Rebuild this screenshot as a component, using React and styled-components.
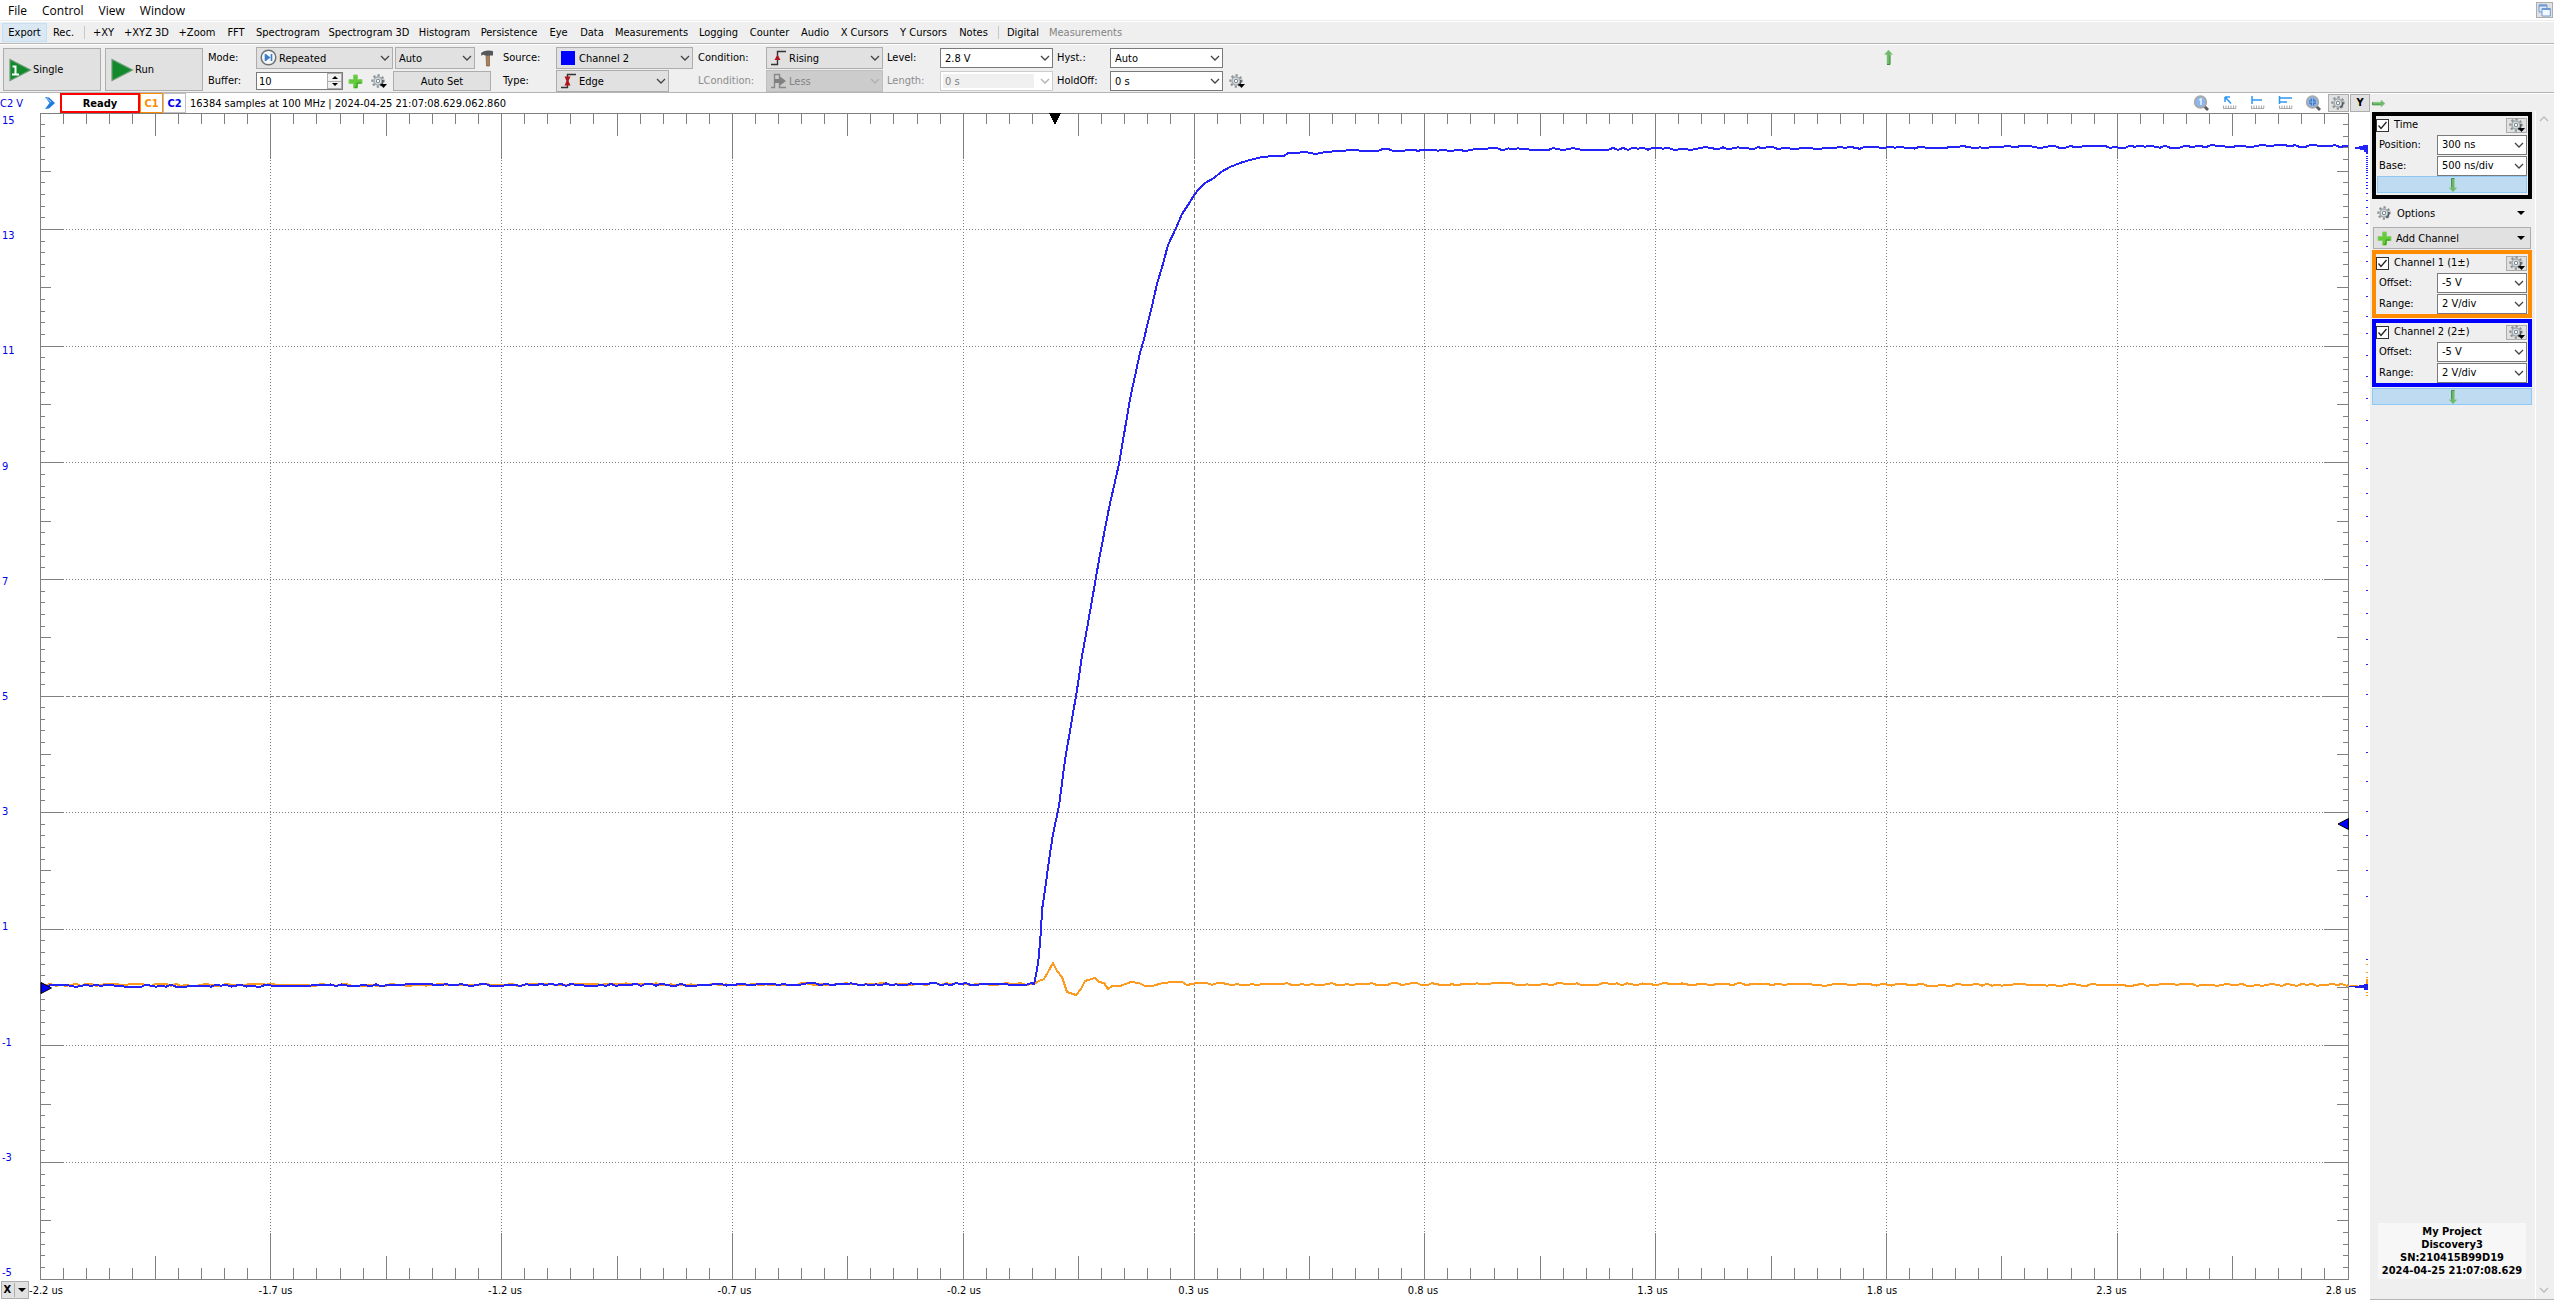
import React from "react";
import styled, { createGlobalStyle, css } from "styled-components";

const GlobalStyle = createGlobalStyle`
    * {
        box-sizing: border-box;
    }

    html, body {
        margin: 0;
        background-color: #fff;
    }

    body, button, input, select {
        font-family: "DejaVu Sans Condensed", "DejaVu Sans", sans-serif;
        font-size: 11px;
        line-height: 14px;
        color: #000;
    }
`

const Page = styled.div`
    display: flex;
    flex-direction: column;
    height: 100vh;
    min-height: 600px;
    overflow: hidden;
`

/* Menu */
const MenuBar = styled.nav`
    display: flex;
    align-items: center;
    gap: 15px;
    height: 21px;
    padding: 0 1px 0 8px;
    border-bottom: 1px solid #ececec;
`

const MenuItem = styled.button`
    padding: 2px 0 0;
    border: 0;
    background: none;
    font-family: "Open Sans", sans-serif;
    font-size: 12px;
    line-height: 16px;
`

const WindowsButton = styled.button`
    display: flex;
    align-items: center;
    justify-content: center;
    width: 17px;
    height: 16px;
    margin-left: auto;
    padding: 0;
    border: 1px solid #adadad;
    background-color: #e1e1e1;
`

/* View toolbar */
const Toolbar = styled.div`
    display: flex;
    align-items: center;
    height: 23px;
    padding: 0 2px;
    background-color: #efefef;
    border-top: 1px solid #fff;
    border-bottom: 1px solid #b4b4b4;
`

const ToolItem = styled.button`
    flex: none;
    width: ${props => props.$width}px;
    height: 19px;
    padding: 1px 0 0;
    border: 1px solid ${props => props.$active ? "#c4dff2" : "transparent"};
    background-color: ${props => props.$active ? "#d9e8f3" : "transparent"};
    color: ${props => props.disabled ? "#838383" : "#000"};
    white-space: nowrap;
`

const ToolSeparator = styled.div`
    width: 1px;
    height: 13px;
    margin: 0 3px 0 4px;
    background-color: #c8c8c8;
`

/* Acquisition controls */
const Controls = styled.div`
    display: flex;
    gap: 4px;
    height: 49px;
    padding: 2px 0 0 3px;
    background-color: #efefef;
    border-top: 1px solid #fff;
    border-bottom: 1px solid #b4b4b4;
`

const RunButton = styled.button`
    display: flex;
    align-items: center;
    gap: 1px;
    flex: none;
    width: 98px;
    height: 43px;
    margin-top: 1px;
    padding: 0 4px;
    border: 1px solid #adadad;
    background-color: #e1e1e1;
`

const Group = styled.div`
    flex: none;
    display: flex;
    flex-direction: column;
    gap: 1px;
    width: ${props => props.$width}px;
    margin-left: ${props => props.$first ? 1 : -4}px;
`

const Line = styled.div`
    display: flex;
    align-items: center;
    gap: 2px;
    height: 22px;
`

const FieldLabel = styled.label`
    flex: none;
    width: ${props => props.$width}px;
    margin-right: -2px;
    color: ${props => props.$disabled ? "#8c8c8c" : "#000"};
    white-space: nowrap;
`

const DropWrap = styled.div`
    position: relative;
    flex: none;
    width: ${props => props.$width}px;
    height: ${props => props.$plain ? 20 : 22}px;
`

const dropLook = css`
    appearance: none;
    width: 100%;
    height: 100%;
    margin: 0;
    border-radius: 0;
    opacity: 1;
`

const Drop = styled.select`
    ${dropLook}
    padding: 1px 18px 0 ${props => props.$icon ? 22 : 3}px;
    border: 1px solid ${props => props.disabled ? "#bfbfbf" : "#adadad"};
    background-color: ${props => props.disabled ? "#cccccc" : "#e1e1e1"};
    color: ${props => props.disabled ? "#838383" : "#000"};
`

const PlainDrop = styled.select`
    ${dropLook}
    padding: 1px 18px 0 4px;
    border: 1px solid ${props => props.disabled ? "#cccccc" : "#7a7a7a"};
    background-color: #fff;
    color: ${props => props.disabled ? "#838383" : "#000"};
    ${props => props.disabled && css`
        background-image: linear-gradient(#f0f0f0, #f0f0f0);
        background-size: calc(100% - 20px) 14px;
        background-position: 2px 2px;
        background-repeat: no-repeat;
    `}
`

const DropIcon = styled.span`
    position: absolute;
    left: 4px;
    top: 2px;
    display: flex;
    pointer-events: none;
`

const DropArrow = styled.span`
    position: absolute;
    right: 3px;
    top: 0;
    bottom: 0;
    display: flex;
    align-items: center;
    pointer-events: none;
`

const SpinBox = styled.div`
    display: flex;
    flex: none;
    width: 87px;
    height: 18px;
    border: 1px solid #7a7a7a;
    background-color: #fff;
`

const SpinInput = styled.input`
    flex: 1;
    min-width: 0;
    padding: 1px 2px 0;
    border: 0;
    outline: 0;
    background: none;
`

const SpinArrows = styled.div`
    display: flex;
    flex-direction: column;
    width: 15px;
    background-color: #f0f0f0;
    border: 1px solid #adadad;
`

const SpinArrow = styled.button`
    display: flex;
    align-items: center;
    justify-content: center;
    flex: 1;
    padding: 0;
    border: 0;
    background: none;

    & + & {
        border-top: 1px solid #adadad;
    }
`

const IconButton = styled.button`
    display: flex;
    align-items: center;
    justify-content: center;
    flex: none;
    width: ${props => props.$width || 24}px;
    height: 20px;
    padding: 0;
    border: 0;
    background: none;
`

const FlatButton = styled.button`
    flex: none;
    width: 98px;
    height: 20px;
    padding: 1px 0 0;
    border: 1px solid #adadad;
    background-color: #e1e1e1;
`

const CollapseArea = styled.div`
    flex: 1;
    display: flex;
    justify-content: flex-end;
    align-items: flex-start;
    padding-right: 654px;
`

/* Work area */
const Workspace = styled.div`
    flex: 1;
    display: flex;
    min-height: 0;
`

const Scope = styled.main`
    flex: 1;
    display: flex;
    flex-direction: column;
    min-width: 0;
`

const StatusBar = styled.div`
    display: flex;
    align-items: center;
    height: 20px;
`

const AxisUnit = styled.div`
    width: 40px;
    padding-top: 2px;
    color: #0000e6;
`

const StateBox = styled.div`
    width: 80px;
    height: 20px;
    border: 2px solid #f00;
    font-weight: bold;
    line-height: 18px;
    text-align: center;
`

const ChannelTag = styled.button`
    width: 23px;
    height: 20px;
    padding: 2px 0 0;
    border: 1px solid ${props => props.$border};
    background-color: #fff;
    color: ${props => props.$color};
    font-weight: bold;
`

const SampleInfo = styled.div`
    padding: 2px 0 0 4px;
    white-space: nowrap;
`

const ViewTools = styled.div`
    display: flex;
    align-items: center;
    margin-left: auto;
`

const ViewTool = styled.button`
    display: flex;
    align-items: center;
    justify-content: center;
    width: 28px;
    height: 20px;
    padding: 0;
    border: 0;
    background: none;
`

const ViewToggle = styled.button`
    display: flex;
    align-items: center;
    justify-content: center;
    width: ${props => props.$width}px;
    height: 18px;
    margin-left: 1px;
    padding: 0;
    border: 1px solid #adadad;
    background-color: #e1e1e1;
    font-weight: bold;
`

const PlotRow = styled.div`
    flex: 1;
    display: flex;
    min-height: 0;
`

const YLabels = styled.div`
    display: flex;
    flex-direction: column;
    justify-content: space-between;
    flex: none;
    width: 40px;
    padding: 1px 0 0 2px;
    color: #0000e6;
`

const PlotCell = styled.div`
    flex: ${props => props.$fixed ? "none" : 1};
    width: ${props => props.$fixed ? "21px" : "auto"};
    min-width: 0;

    svg {
        display: block;
        width: 100%;
        height: 100%;
    }
`

const XRow = styled.div`
    display: flex;
    align-items: center;
    height: 20px;
    padding: 0 13px 0 1px;
`

const XButton = styled.button`
    display: flex;
    align-items: center;
    justify-content: space-around;
    flex: none;
    width: 28px;
    height: 18px;
    margin-right: 1px;
    padding: 0;
    border: 1px solid #adadad;
    background-color: #e1e1e1;
    font-weight: bold;
`

const XDivider = styled.span`
    width: 1px;
    height: 14px;
    background-color: #adadad;
`

const XLabels = styled.div`
    flex: 1;
    display: flex;
    justify-content: space-between;
    padding-top: 2px;
    white-space: nowrap;
`

const XLabel = styled.span`
    display: flex;
    justify-content: center;
    width: 32px;
`

/* Sidebar */
const Sidebar = styled.aside`
    display: flex;
    flex-direction: column;
    flex: none;
    width: 184px;
    background-color: #efefef;
    border-bottom: 1px solid #b4b4b4;
`

const SidebarTop = styled.div`
    display: flex;
    align-items: center;
    height: 18px;
    padding: 2px 0 0 2px;
    border-top: 1px solid #fff;
`

const SidebarBody = styled.div`
    flex: 1;
    display: flex;
    justify-content: space-between;
    min-height: 0;
`

const PanelColumn = styled.div`
    display: flex;
    flex-direction: column;
    gap: 1px;
    width: 162px;
    padding: 1px 0 20px 2px;
`

const ScrollTrack = styled.div`
    display: flex;
    flex-direction: column;
    justify-content: space-between;
    align-items: center;
    width: 19px;
    padding: 5px 3px 6px 0;
    border-left: 1px solid #fff;
`

const Panel = styled.section`
    border: 4px solid ${props => props.$color};
`

const PanelHead = styled.div`
    display: flex;
    align-items: center;
    justify-content: space-between;
    height: 18px;
    padding-right: 1px;
`

const CheckLabel = styled.label`
    display: flex;
    align-items: center;
    gap: 5px;
`

const CheckBox = styled.input`
    appearance: none;
    width: 13px;
    height: 13px;
    margin: 0;
    border: 1px solid #333;
    background: #fff;
`

const CheckMark = styled.span`
    position: absolute;
    display: flex;
    pointer-events: none;
    left: 1px;
`

const CheckWrap = styled.span`
    position: relative;
    display: flex;
    align-items: center;
`

const GearButton = styled.button`
    display: flex;
    align-items: center;
    justify-content: center;
    width: 21px;
    height: 15px;
    padding: 0;
    border: 1px solid #adadad;
    background-color: #e1e1e1;
`

const PanelRow = styled.div`
    display: flex;
    align-items: center;
    justify-content: space-between;
    height: 21px;
    padding: 0 1px 0 3px;
`

const BlueBar = styled.button`
    display: flex;
    align-items: center;
    justify-content: center;
    flex: none;
    width: ${props => props.$inset ? "150px" : "100%"};
    height: 17px;
    margin: ${props => props.$inset ? "0 1px 2px" : "0"};
    padding: 1px 0 0 2px;
    border: 1px solid #8ec8f5;
    background-color: #bfdbf1;
`

const MenuButton = styled.button`
    display: flex;
    align-items: center;
    flex: none;
    gap: 4px;
    height: 22px;
    margin: 0 1px;
    padding: 0 5px 0 3px;
    border: 1px solid ${props => props.$raised ? "#adadad" : "transparent"};
    background-color: ${props => props.$raised ? "#e1e1e1" : "transparent"};
    text-align: left;

    span {
        flex: 1;
        padding-top: 1px;
    }
`

const OptionsSlot = styled.div`
    display: flex;
    flex-direction: column;
    justify-content: center;
    height: 26px;
`

const ProjectInfo = styled.div`
    align-self: center;
    margin-top: auto;
    padding: 2px 0;
    width: 148px;
    background-color: #f7f7f7;
    font-weight: bold;
    line-height: 13px;
    text-align: center;
    white-space: nowrap;
`

/**
* Icons
*/

const Chevron = ({ color = "#444", up }) => (
    <svg width="10" height="6" viewBox="0 0 10 6">
        <path d={up ? "M1 5 L5 1 L9 5" : "M1 1 L5 5 L9 1"} fill="none" stroke={color} strokeWidth="1.3" />
    </svg>
)

const Triangle = ({ size = 8, up }) => (
    <svg width={size} height={size / 2} viewBox="0 0 8 4">
        <path d={up ? "M0 4 L4 0 L8 4 Z" : "M0 0 H8 L4 4 Z"} fill="#000" />
    </svg>
)

const Gear = ({ arrow }) => (
    <svg width="16" height="15" viewBox="0 0 16 15">
        <g transform="rotate(-12 7 7)">
            <circle cx="7" cy="7" r="5.6" fill="none" stroke="#8b9296" strokeWidth="2.2" strokeDasharray="2.2 2.2" />
            <circle cx="7" cy="7" r="4" fill="#dfe6ea" stroke="#a3abb0" strokeWidth="1.6" />
            <circle cx="7" cy="7" r="1.7" fill="#fff" stroke="#7c8488" strokeWidth="1" />
            <path d="M8 11.8 A4.8 4.8 0 0 0 11.8 7" fill="none" stroke="#4e5558" strokeWidth="1.4" />
        </g>
        {arrow && <path d="M9 10 H16 L12.5 14 Z" fill="#000" />}
    </svg>
)

const Plus = () => (
    <svg width="15" height="15" viewBox="0 0 15 15">
        <path d="M5.5 1 H9.5 V5.5 H14 V9.5 H9.5 V14 H5.5 V9.5 H1 V5.5 H5.5 Z" fill="#62cc38" stroke="#8ccf70" strokeWidth="1" />
        <path d="M6.5 13.3 H9 V9 H13.3" fill="none" stroke="#2f9a12" strokeWidth="1" />
    </svg>
)

// angle 0 points up
const GreenArrow = ({ angle = 0, length = 15 }) => (
    <svg width={length} height={length} viewBox="0 0 15 15">
        <g transform={`rotate(${angle} 7.5 7.5)`}>
            <path d="M7.5 0 L11.5 4.5 H9 V14.5 H6 V4.5 H3.5 Z" fill="#6dbb68" stroke="#8cc588" strokeWidth="0.5" />
            <path d="M9 5 V14.5 H6" fill="none" stroke="#3a8b3c" strokeWidth="1" />
        </g>
    </svg>
)

const PlayIcon = ({ single }) => (
    <svg width="24" height="24" viewBox="0 0 24 24">
        <path d="M2 1.5 L22.5 12 L2 22.5 Z" fill="#128a2c" stroke="#6a9c74" strokeWidth="1.2" />
        {single && <path d="M4.5 8.5 H7.5 V16 M4 16.5 H11" fill="none" stroke="#fff" strokeWidth="2" />}
    </svg>
)

const RepeatIcon = () => (
    <svg width="17" height="17" viewBox="0 0 17 17">
        <circle cx="8.5" cy="8.5" r="7.3" fill="#f4f7fa" stroke="#6e7276" strokeWidth="1.5" />
        <path d="M5.5 5 V12 M11.5 5 V12" stroke="#3f7cc8" strokeWidth="1.6" />
        <path d="M6 5.2 L10.5 8.5 L6 11.8 Z" fill="#3f7cc8" />
    </svg>
)

const HammerIcon = () => (
    <svg width="15" height="17" viewBox="0 0 15 17">
        <path d="M6 5 H9.5 L9.5 16 H6.5 Z" fill="#a8805c" stroke="#7a5a3e" strokeWidth="0.7" />
        <path d="M1 3 Q4 0 9 0.5 L13 1 V5.5 H10 L5 5.5 Q3 4 1.5 6 Z" fill="#55585a" />
    </svg>
)

const ColorSwatch = () => (
    <svg width="15" height="16" viewBox="0 0 15 16">
        <path d="M1 2 H15 V16 H1 Z" fill="#00f" />
    </svg>
)

const EdgeIcon = ({ both }) => (
    <svg width="17" height="17" viewBox="0 0 17 17">
        <path d="M1 15.5 H7.5 V2.5 H16" fill="none" stroke="#333" strokeWidth="1.4" />
        {both
            ? <path d="M4.5 4.5 H10.5 L8.5 9 L10.5 13.5 H4.5 L6.5 9 Z" fill="#b2141e" />
            : <path d="M4.5 11 L7.5 5.5 L10.5 11 Z" fill="#b2141e" />}
    </svg>
)

const LessIcon = () => (
    <svg width="17" height="17" viewBox="0 0 17 17">
        <path d="M1 15.5 H4.5 V2.5 H9.5 V15.5 H16" fill="none" stroke="#888" strokeWidth="1.4" />
        <path d="M4 7 H10 V4.5 L16 9 L10 13.5 V11 H4 Z" fill="#808080" />
    </svg>
)

const WindowsIcon = () => (
    <svg width="13" height="13" viewBox="0 0 13 13">
        <path d="M1 1 H9 V8 H1 Z" fill="#dce9f8" stroke="#6f9bd2" />
        <path d="M1 1.5 H9" stroke="#6f9bd2" strokeWidth="2" />
        <path d="M4 4.5 H12.3 V12 H4 Z" fill="#f2f8ff" stroke="#6f9bd2" />
        <path d="M4 5 H12.3" stroke="#6f9bd2" strokeWidth="2" />
    </svg>
)

const Magnifier = ({ fit }) => (
    <svg width="17" height="17" viewBox="0 0 17 17">
        <path d="M11 11 L15 15" stroke="#5d5d5d" strokeWidth="2.8" />
        <circle cx="7.5" cy="7" r="5.8" fill="#8db7ea" stroke="#a9a9a9" strokeWidth="1.8" />
        {fit
            ? <path d="M4 5.8 H6.3 V3.5 M8.7 3.5 V5.8 H11 M4 8.2 H6.3 V10.5 M8.7 10.5 V8.2 H11" fill="none" stroke="#3f74c0" strokeWidth="1.2" />
            : <path d="M6.3 5 L8 4 V10" fill="none" stroke="#f4f8ff" strokeWidth="1.4" />}
    </svg>
)

const cursorShapes = {
    pointer: "M3 1 H8 M3 1 V6 M3 1 L9 7.5",
    single: "M2 0 V8 M2 4 H12",
    double: "M1.5 0 V8 M1.5 2 H14 M1.5 6 H9",
}

const CursorIcon = ({ shape }) => (
    <svg width="15" height="14" viewBox="0 0 15 14">
        <path d={cursorShapes[shape]} fill="none" stroke="#2b97f3" strokeWidth="1.5" />
        <path d="M1 12.5 H14 M1.5 12 V9.5 M4 12 V9.5 M6.5 12 V9.5 M9 12 V9.5 M11.5 12 V9.5 M13.8 12 V9.5" fill="none" stroke="#aaa" strokeWidth="1.1" />
    </svg>
)

const BlueChevron = () => (
    <svg width="20" height="14" viewBox="0 0 20 14">
        <path d="M5 1 L9 1.5 L15 7 L9 12.5 L5 13 L9.5 7 Z" fill="#1f7be0" />
        <path d="M6.5 2 L11 6" stroke="#8fc1f5" strokeWidth="1.2" />
    </svg>
)

/**
* Controls
*/

const Dropdown = ({ id, label, width, value, icon, plain, disabled }) => {
    const Box = plain ? PlainDrop : Drop;
    return (
        <DropWrap $width={width} $plain={plain}>
            <Box id={id} aria-label={label} $icon={!!icon} disabled={disabled} defaultValue={value}>
                <option>{value}</option>
            </Box>
            {icon && <DropIcon>{icon}</DropIcon>}
            <DropArrow><Chevron color={disabled ? "#b0b0b0" : "#444"} /></DropArrow>
        </DropWrap>
    )
}

const ChannelPanel = ({ name, title, color, rows, children }) => (
    <Panel $color={color}>
        <PanelHead>
            <CheckLabel>
                <CheckWrap>
                    <CheckBox type="checkbox" defaultChecked />
                    <CheckMark>
                        <svg width="11" height="11" viewBox="0 0 11 11">
                            <path d="M1.5 5.5 L4 8.5 L9.5 2" fill="none" stroke="#222" strokeWidth="1.3" />
                        </svg>
                    </CheckMark>
                </CheckWrap>
                {title}
            </CheckLabel>
            <GearButton aria-label={`${title} settings`}><Gear arrow /></GearButton>
        </PanelHead>
        {rows.map(([label, value]) => (
            <PanelRow key={label}>
                <label htmlFor={`${name}-${label}`}>{label}:</label>
                <Dropdown id={`${name}-${label}`} width={90} value={value} plain />
            </PanelRow>
        ))}
        {children}
    </Panel>
)

/**
* Plot
*/

const LEFT = 40, TOP = 113, WIDTH = 2308, HEIGHT = 1166;
const RIGHT = LEFT + WIDTH;
const BOTTOM = TOP + HEIGHT;

// Small repeatable jitter, so both traces look sampled
const jitter = (i, seed) => {
    const v = Math.sin(i * 12.9898 + seed * 78.233) * 43758.5453;
    return v - Math.floor(v);
}

const noisy = (from, to, yFrom, yTo, seed) => {
    const points = [];
    for (let x = from, i = 0; x < to; x += 5, i++) {
        const y = yFrom + (yTo - yFrom) * (x - from) / (to - from);
        points.push([x, y + Math.round((jitter(i, seed) - 0.5) * 2.6)]);
    }
    points.push([to, yTo]);
    return points;
}

const channel1 = [
    ...noisy(41, 1034, 985, 984, 3),
    [1039, 981], [1044, 979], [1048, 972], [1053, 963], [1057, 971], [1062, 977],
    [1067, 992], [1076, 995], [1081, 989], [1085, 981], [1095, 978], [1099, 982],
    [1104, 983], [1108, 989], [1112, 986], [1120, 986], [1131, 982], [1139, 983],
    [1145, 986], [1152, 986], [1163, 983], [1173, 982], [1182, 982], [1187, 985],
    ...noisy(1197, 2348, 984, 985, 5),
]

const channel2 = [
    ...noisy(41, 1034, 986, 984, 8),
    [1037, 970], [1039, 955], [1041, 930], [1042, 910], [1045, 890], [1049, 860],
    [1053, 834], [1059, 806], [1065, 760], [1071, 725], [1077, 690], [1082, 656],
    [1088, 623], [1099, 560], [1109, 508], [1119, 464], [1130, 399], [1140, 353],
    [1144, 339], [1148, 322], [1152, 306], [1157, 284], [1163, 264], [1168, 245],
    [1176, 228], [1182, 214], [1190, 202], [1194, 195], [1199, 189], [1205, 183],
    [1214, 178], [1221, 172], [1230, 167], [1240, 163], [1250, 160], [1262, 157],
    [1274, 156], [1284, 156], [1288, 153], [1295, 153], [1305, 152], [1316, 154],
    [1325, 152], [1340, 151], [1352, 150], [1365, 151],
    ...noisy(1378, 1800, 150, 148, 11),
    ...noisy(1805, 2348, 148, 146, 14),
]

const toPoints = points => points.map(p => p.join(",")).join(" ");

const tickPath = () => {
    let d = "";
    for (let i = 1; i < 100; i++) {
        const major = i % 10 === 0, middle = i % 5 === 0;
        const x = Math.floor(LEFT + WIDTH * i / 100) + 0.5;
        const y = Math.floor(TOP + HEIGHT * i / 100) + 0.5;
        const v = major ? 46 : middle ? 23 : 11;
        const h = major ? 24 : middle ? 11 : 5;
        d += `M${x} ${TOP} v${v} M${x} ${BOTTOM} v${-v} `;
        d += `M${LEFT} ${y} h${h} M${RIGHT} ${y} h${-h} `;
    }
    return d;
}

const ticks = tickPath();
const divisions = [1, 2, 3, 4, 5, 6, 7, 8, 9];

const Plot = () => (
    <svg viewBox={`${LEFT} ${TOP} ${WIDTH + 1} ${HEIGHT + 1}`} preserveAspectRatio="none" shapeRendering="crispEdges">
        <g fill="none" stroke="#808080" strokeWidth="1">
            {divisions.map(i => {
                const x = Math.floor(LEFT + WIDTH * i / 10) + 0.5;
                const y = Math.floor(TOP + HEIGHT * i / 10) + 0.5;
                const dash = i === 5 ? "4 2" : "1 2";
                return (
                    <g key={i} strokeDasharray={dash}>
                        <path d={`M${x} ${TOP + 47} V${BOTTOM - 47}`} />
                        <path d={`M${LEFT + 26} ${y} H${RIGHT - 24}`} />
                    </g>
                )
            })}
            <path d={ticks} />
            <path d={`M${LEFT + 0.5} ${TOP + 0.5} H${RIGHT + 0.5} V${BOTTOM + 0.5} H${LEFT + 0.5} Z`} />
        </g>
        <polyline points={toPoints(channel1)} fill="none" stroke="#ff9a20" strokeWidth="2" />
        <polyline points={toPoints(channel2)} fill="none" stroke="#2424f8" strokeWidth="2" />
        <path d="M1049 113 H1061 L1055 125 Z" fill="#000" />
        <path d="M41 982.5 L51.5 988 L41 993.5 Z" fill="#00f" stroke="#000" strokeWidth="1" shapeRendering="auto" />
        <path d="M2348.5 818.5 L2338 824 L2348.5 829.5 Z" fill="#00f" stroke="#000" strokeWidth="1" shapeRendering="auto" />
    </svg>
)

const histogram2 = [
    156, 158, 160, 162, 164, 166, 168, 170, 172, 175, 178, 182, 185, 188, 193,
    200, 207, 214, 223, 235, 246, 261, 278, 296, 316, 333, 355, 376, 398, 420,
    443, 468, 493, 516, 541, 565, 590, 613, 639, 664, 694, 726, 752, 781, 811,
    835, 870, 896, 959,
]
const histogram1 = [964, 972, 977, 979, 981, 983, 985, 987, 989, 992, 995];

const Histogram = () => (
    <svg viewBox={`2349 ${TOP} 21 ${HEIGHT + 1}`} preserveAspectRatio="none" shapeRendering="crispEdges">
        {histogram1.map(y => <rect key={y} x="2366" y={y} width="2" height="1" fill="#ff9a20" />)}
        {histogram2.map(y => <rect key={y} x="2366" y={y} width="2" height="1" fill="#2424f8" />)}
        <path d="M2355 147 H2359 V146 H2363 V145 H2368 V154 H2366 V152 H2364 V150 H2360 V149 H2355 Z" fill="#2424f8" />
        <path d="M2350 985 H2358 V986 H2350 Z M2366 980 H2368 V985 H2366 Z" fill="#ff9a20" />
        <path d="M2349 986 H2359 V985 H2364 V984 H2368 V990 H2364 V988 H2355 V987 H2349 Z" fill="#2020e8" />
    </svg>
)

const menuItems = ["File", "Control", "View", "Window"];

const toolItems = [
    ["Export", 45], ["Rec.", 33], null, ["+XY", 31], ["+XYZ 3D", 55], ["+Zoom", 46],
    ["FFT", 32], ["Spectrogram", 72], ["Spectrogram 3D", 90], ["Histogram", 61],
    ["Persistence", 68], ["Eye", 31], ["Data", 36], ["Measurements", 83],
    ["Logging", 51], ["Counter", 51], ["Audio", 40], ["X Cursors", 59],
    ["Y Cursors", 59], ["Notes", 41], null, ["Digital", 42], ["Measurements", 83, true],
]

const yLabels = [15, 13, 11, 9, 7, 5, 3, 1, -1, -3, -5];
const xLabels = ["-2.2", "-1.7", "-1.2", "-0.7", "-0.2", "0.3", "0.8", "1.3", "1.8", "2.3", "2.8"];

const App = () => (
    <Page>
        <GlobalStyle />
        <MenuBar>
            {menuItems.map(item => <MenuItem key={item}>{item}</MenuItem>)}
            <WindowsButton aria-label="Windows"><WindowsIcon /></WindowsButton>
        </MenuBar>
        <Toolbar>
            {toolItems.map((item, i) => item
                ? <ToolItem key={i} $width={item[1]} $active={i === 0} disabled={item[2]}>{item[0]}</ToolItem>
                : <ToolSeparator key={i} />
            )}
        </Toolbar>
        <Controls>
            <RunButton><PlayIcon single />Single</RunButton>
            <RunButton><PlayIcon />Run</RunButton>
            <Group $width={295} $first>
                <Line>
                    <FieldLabel htmlFor="mode" $width={48}>Mode:</FieldLabel>
                    <Dropdown id="mode" width={137} value="Repeated" icon={<RepeatIcon />} />
                    <Dropdown label="Trigger mode" width={80} value="Auto" />
                    <IconButton aria-label="Tools" $width={20}><HammerIcon /></IconButton>
                </Line>
                <Line>
                    <FieldLabel htmlFor="buffer" $width={48}>Buffer:</FieldLabel>
                    <SpinBox>
                        <SpinInput id="buffer" defaultValue="10" />
                        <SpinArrows>
                            <SpinArrow aria-label="Increase"><Triangle size={6} up /></SpinArrow>
                            <SpinArrow aria-label="Decrease"><Triangle size={6} /></SpinArrow>
                        </SpinArrows>
                    </SpinBox>
                    <IconButton aria-label="Add buffer" $width={20}><Plus /></IconButton>
                    <IconButton aria-label="Buffer settings"><Gear arrow /></IconButton>
                    <FlatButton>Auto Set</FlatButton>
                </Line>
            </Group>
            <Group $width={195}>
                <Line>
                    <FieldLabel htmlFor="source" $width={53}>Source:</FieldLabel>
                    <Dropdown id="source" width={137} value="Channel 2" icon={<ColorSwatch />} />
                </Line>
                <Line>
                    <FieldLabel htmlFor="type" $width={53}>Type:</FieldLabel>
                    <Dropdown id="type" width={113} value="Edge" icon={<EdgeIcon both />} />
                </Line>
            </Group>
            <Group $width={189}>
                <Line>
                    <FieldLabel htmlFor="condition" $width={68}>Condition:</FieldLabel>
                    <Dropdown id="condition" width={117} value="Rising" icon={<EdgeIcon />} />
                </Line>
                <Line>
                    <FieldLabel htmlFor="lcondition" $width={68} $disabled>LCondition:</FieldLabel>
                    <Dropdown id="lcondition" width={117} value="Less" icon={<LessIcon />} disabled />
                </Line>
            </Group>
            <Group $width={170}>
                <Line>
                    <FieldLabel htmlFor="level" $width={53}>Level:</FieldLabel>
                    <Dropdown id="level" width={113} value="2.8 V" plain />
                </Line>
                <Line>
                    <FieldLabel htmlFor="length" $width={53} $disabled>Length:</FieldLabel>
                    <Dropdown id="length" width={113} value="0 s" plain disabled />
                </Line>
            </Group>
            <Group $width={195}>
                <Line>
                    <FieldLabel htmlFor="hyst" $width={53}>Hyst.:</FieldLabel>
                    <Dropdown id="hyst" width={113} value="Auto" plain />
                </Line>
                <Line>
                    <FieldLabel htmlFor="holdoff" $width={53}>HoldOff:</FieldLabel>
                    <Dropdown id="holdoff" width={113} value="0 s" plain />
                    <IconButton aria-label="Trigger settings"><Gear arrow /></IconButton>
                </Line>
            </Group>
            <CollapseArea>
                <IconButton aria-label="Collapse"><GreenArrow /></IconButton>
            </CollapseArea>
        </Controls>
        <Workspace>
            <Scope>
                <StatusBar>
                    <AxisUnit>C2 V</AxisUnit>
                    <BlueChevron />
                    <StateBox>Ready</StateBox>
                    <ChannelTag $border="#ff8c00" $color="#ff8c00">C1</ChannelTag>
                    <ChannelTag $border="#c0c0c0" $color="#0000f0">C2</ChannelTag>
                    <SampleInfo>16384 samples at 100 MHz | 2024-04-25 21:07:08.629.062.860</SampleInfo>
                    <ViewTools>
                        <ViewTool aria-label="Zoom 1:1"><Magnifier /></ViewTool>
                        <ViewTool aria-label="Pointer"><CursorIcon shape="pointer" /></ViewTool>
                        <ViewTool aria-label="Cursor"><CursorIcon shape="single" /></ViewTool>
                        <ViewTool aria-label="Cursor pair"><CursorIcon shape="double" /></ViewTool>
                        <ViewTool aria-label="Zoom to fit"><Magnifier fit /></ViewTool>
                        <ViewToggle $width={21} aria-label="Plot settings"><Gear /></ViewToggle>
                        <ViewToggle $width={20}>Y</ViewToggle>
                    </ViewTools>
                </StatusBar>
                <PlotRow>
                    <YLabels>
                        {yLabels.map(y => <span key={y}>{y}</span>)}
                    </YLabels>
                    <PlotCell><Plot /></PlotCell>
                    <PlotCell $fixed><Histogram /></PlotCell>
                </PlotRow>
                <XRow>
                    <XButton>X<XDivider /><Triangle size={8} /></XButton>
                    <XLabels>
                        {xLabels.map(x => <XLabel key={x}>{x} us</XLabel>)}
                    </XLabels>
                </XRow>
            </Scope>
            <Sidebar>
                <SidebarTop><GreenArrow angle={90} length={13} /></SidebarTop>
                <SidebarBody>
                    <PanelColumn>
                        <ChannelPanel name="time" title="Time" color="#000" rows={[["Position", "300 ns"], ["Base", "500 ns/div"]]}>
                            <BlueBar $inset aria-label="Show more time options"><GreenArrow angle={180} length={14} /></BlueBar>
                        </ChannelPanel>
                        <OptionsSlot>
                            <MenuButton><Gear /><span>Options</span><Triangle /></MenuButton>
                        </OptionsSlot>
                        <MenuButton $raised><Plus /><span>Add Channel</span><Triangle /></MenuButton>
                        <ChannelPanel name="ch1" title="Channel 1 (1±)" color="#ff8c00" rows={[["Offset", "-5 V"], ["Range", "2 V/div"]]} />
                        <ChannelPanel name="ch2" title="Channel 2 (2±)" color="#00f" rows={[["Offset", "-5 V"], ["Range", "2 V/div"]]} />
                        <BlueBar aria-label="Show more channel options"><GreenArrow angle={180} length={14} /></BlueBar>
                        <ProjectInfo>
                            My Project<br />Discovery3<br />SN:210415B99D19<br />2024-04-25 21:07:08.629
                        </ProjectInfo>
                    </PanelColumn>
                    <ScrollTrack>
                        <Chevron color="#bbb" up />
                        <Chevron color="#bbb" />
                    </ScrollTrack>
                </SidebarBody>
            </Sidebar>
        </Workspace>
    </Page>
)

export default App;
